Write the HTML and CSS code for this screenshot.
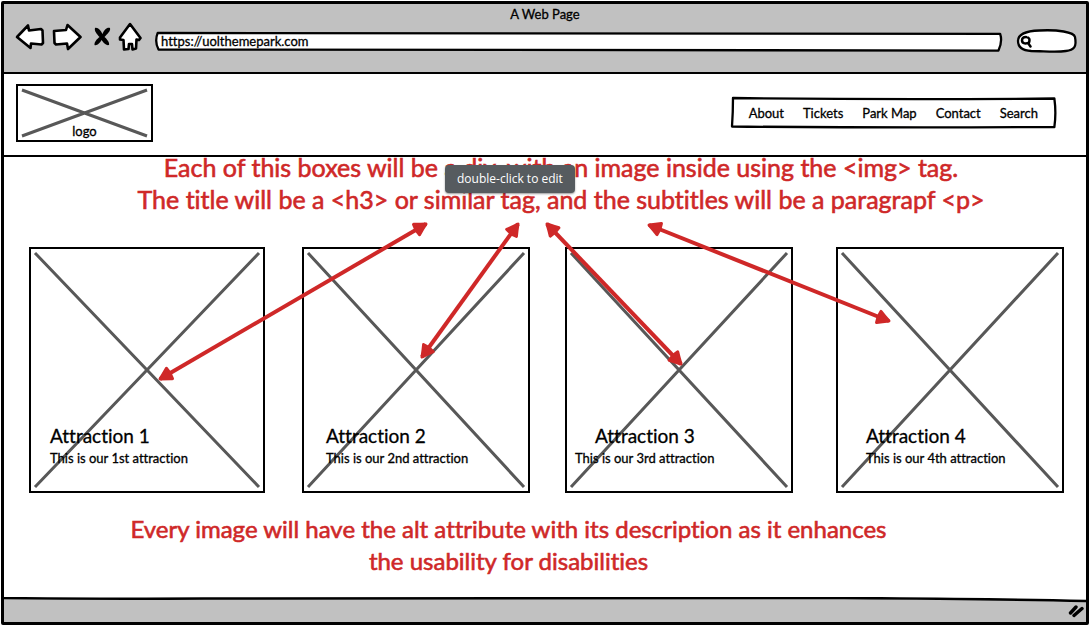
FILE: index.html
```html
<!DOCTYPE html>
<html lang="en">
<head>
<meta charset="utf-8">
<title>A Web Page</title>
<link rel="stylesheet" href="styles.css">
</head>
<body>
<div class="window">
  <header class="chrome">
    <div class="window-title">A Web Page</div>
    <div class="toolbar">
      <div class="tools">
        <button class="tool" type="button" aria-label="Back"><svg width="30" height="28" viewBox="0 0 30 28"><path d="M2 14 13 2.500 14 7.500 26 6 27.500 7.500 28 20 26.500 21.500 16 20.500 15.500 25Z"/></svg></button>
        <button class="tool" type="button" aria-label="Forward"><svg width="30" height="28" viewBox="0 0 30 28"><path d="M2 8 14 7 15.500 2 28.500 14 16 26 15 20.500 4 21.500 2.500 20Z"/></svg></button>
        <button class="tool tool-stop" type="button" aria-label="Stop"><svg width="18" height="22" viewBox="0 0 18 22"><path class="solid" d="M2 2C5 1 8 5 9.500 8 11 4 14 1 17 2 18 5 14 8 11.500 11 14 13 17 17 16 19 13 20 10 16 8.500 14 7 17 4 20 1.500 19 1 16 4 13 6.500 11 4 8 1 5 2 2Z"/></svg></button>
        <button class="tool" type="button" aria-label="Home"><svg width="24" height="30" viewBox="0 0 24 30"><path d="M12 2 22.500 16 21 18 18.500 17.500 18 26.500 14.500 27.500 14 22 11 22 10.500 27 6 27.500 5.500 18 2 17.500 2 15.500Z"/></svg></button>
      </div>
      <div class="field field-url">
        <svg class="sketch" viewBox="0 0 100 20" preserveAspectRatio="none" aria-hidden="true"><path d="M.2 1 99.900 2Q100.200 10 99.700 19.500L.3 18.500Q-.2 10 .2 1Z"/></svg>
        <input class="url" type="text" aria-label="Address" value="https://uolthemepark.com">
      </div>
      <div class="field field-search">
        <svg class="sketch" viewBox="0 0 58 22" preserveAspectRatio="none" aria-hidden="true"><path d="M1 11C1 4 8 1 22 .5 40-.5 56 2 57 7 59 17 56 20 48 21 38 22.500 26 21 14 21 5 20.500 1 17 1 11Z"/></svg>
        <svg class="lens" width="12" height="14" viewBox="0 0 12 14" aria-hidden="true"><path d="M6 2C9.500 2 10 5 9 7.500 6.500 9 2 9 2 5.500 2 3 4 2 6 2M8 8 10.500 11.500"/></svg>
        <input class="search" type="text" aria-label="Search the web">
      </div>
    </div>
  </header>

  <main class="page">
    <div class="site-header">
      <a class="logo" href="#">
        <svg class="cross" viewBox="0 0 100 100" preserveAspectRatio="none" aria-hidden="true"><path d="M0 0 100 100M100 0 0 100"/></svg>
        <span class="logo-text">logo</span>
      </a>
      <nav class="nav">
        <svg class="sketch" viewBox="0 0 326 29" preserveAspectRatio="none" aria-hidden="true"><path d="M1 0Q160 2 325 .5 327 15 325 29 160 30 0 28.500 1 14 1 0Z"/></svg>
        <a href="#">About</a><a href="#">Tickets</a><a href="#">Park Map</a><a href="#">Contact</a><a href="#">Search</a>
      </nav>
    </div>

    <div class="board">
      <div class="note note-top">Each of this boxes will be a div, with an image inside using the &lt;img&gt; tag.<br>The title will be a &lt;h3&gt; or similar tag, and the subtitles will be a paragrapf &lt;p&gt;</div>
      <div class="tooltip" role="tooltip">double-click to edit</div>

      <section class="cards">
        <article class="card">
          <svg class="cross" viewBox="0 0 100 100" preserveAspectRatio="none" aria-hidden="true"><path d="M0 0 100 100M100 0 0 100"/></svg>
          <h3>Attraction 1</h3><p>This is our 1st attraction</p>
        </article>
        <article class="card card-2">
          <svg class="cross" viewBox="0 0 100 100" preserveAspectRatio="none" aria-hidden="true"><path d="M0 0 100 100M100 0 0 100"/></svg>
          <h3>Attraction 2</h3><p>This is our 2nd attraction</p>
        </article>
        <article class="card card-3">
          <svg class="cross" viewBox="0 0 100 100" preserveAspectRatio="none" aria-hidden="true"><path d="M0 0 100 100M100 0 0 100"/></svg>
          <h3>Attraction 3</h3><p>This is our 3rd attraction</p>
        </article>
        <article class="card card-4">
          <svg class="cross" viewBox="0 0 100 100" preserveAspectRatio="none" aria-hidden="true"><path d="M0 0 100 100M100 0 0 100"/></svg>
          <h3>Attraction 4</h3><p>This is our 4th attraction</p>
        </article>
      </section>

      <svg class="arrows" viewBox="4 157 1082 440" preserveAspectRatio="none" aria-hidden="true">
        <defs>
          <marker id="head" viewBox="0 0 16 16" refX="14" refY="8" markerWidth="16" markerHeight="16" markerUnits="userSpaceOnUse" orient="auto-start-reverse"><path class="head" d="M3 2Q8 5 14 8 8 11 3 14 1.500 8 3 2Z"/></marker>
        </defs>
        <path class="arrow" d="M160 379 426 224"/>
        <path class="arrow" d="M422 357 518 224"/>
        <path class="arrow" d="M547 224 681 364"/>
        <path class="arrow" d="M649 225 889 321"/>
      </svg>

      <div class="note note-bottom">Every image will have the alt attribute with its description as it enhances<br>the usability for disabilities</div>
    </div>
  </main>

  <footer class="status">
    <svg class="status-bg" viewBox="0 0 1082 25" preserveAspectRatio="none" aria-hidden="true"><path d="M-5 1Q80 2 200 1.500T840 1Q1000 2 1087 4V30H-5Z"/></svg>
    <svg class="grip" width="16" height="14" viewBox="0 0 16 14" aria-hidden="true"><path d="M2.500 9 8 3M6 11.500 14 4.500"/></svg>
  </footer>
</div>
</body>
</html>
```

FILE: styles.css
```css
* { box-sizing: border-box; }

body {
  margin: 0;
  background: #fff;
  color: #000;
  font-family: Lato, "Open Sans", sans-serif;
  font-size: 13px;
  font-variant-ligatures: none;
  line-height: 18px;
  -webkit-text-stroke: 0.3px currentColor;
}

.window {
  display: flex;
  flex-direction: column;
  min-height: calc(100vh - 3px);
  margin: 1px 1px 2px;
  border: 3px solid #000;
  border-radius: 2px;
}

.chrome {
  height: 70px;
  background: #c1c1c1;
  border-bottom: 2px solid #000;
}

.window-title { padding-top: 1px; text-align: center; }

.toolbar {
  display: flex;
  align-items: center;
  gap: 14px;
  height: 30px;
  margin-top: -1px;
  padding: 0 10px 0 11px;
}

.tools { display: flex; align-items: center; gap: 7px; }

.tool {
  display: flex;
  padding: 0;
  border: 0;
  background: none;
}

.tool-stop { margin-left: 4px; }

.tool path {
  fill: #fff;
  stroke: #000;
  stroke-width: 2.6;
  stroke-linejoin: round;
}

.tool .solid { fill: #000; stroke: none; }

.sketch {
  position: absolute;
  inset: 0;
  width: 100%;
  height: 100%;
  overflow: visible;
}

.sketch path {
  fill: #fff;
  stroke: #000;
  stroke-width: 2.3px;
  stroke-linejoin: round;
  vector-effect: non-scaling-stroke;
}

.field { position: relative; display: flex; align-items: center; margin-top: 8px; }
.field-url { flex: 1; height: 19px; }
.field-search { width: 59px; height: 22px; margin-left: 2px; }

.field input {
  position: relative;
  width: 100%;
  padding: 0 5px;
  border: 0;
  outline: 0;
  background: none;
  color: #000;
  font: inherit;
  font-variant-ligatures: none;
  -webkit-text-stroke: inherit;
}

.field .search { padding-left: 18px; }

.lens { position: absolute; left: 3px; top: 5px; }

.lens path {
  fill: none;
  stroke: #000;
  stroke-width: 2.5;
  stroke-linecap: round;
}

.page { display: flex; flex: 1; flex-direction: column; }

.site-header {
  display: flex;
  align-items: center;
  justify-content: space-between;
  height: 83px;
  padding: 0 31px 4px 12px;
  border-bottom: 2px solid #000;
}

.logo {
  position: relative;
  display: flex;
  align-items: flex-end;
  justify-content: center;
  width: 137px;
  height: 58px;
  border: 2px solid #000;
  color: inherit;
  text-decoration: none;
}

.logo-text { position: relative; }

.cross {
  position: absolute;
  top: 4px;
  left: 4px;
  width: calc(100% - 8px);
  height: calc(100% - 8px);
  overflow: visible;
}

.cross path {
  fill: none;
  stroke: #585858;
  stroke-width: 3px;
  vector-effect: non-scaling-stroke;
}

.nav {
  position: relative;
  display: flex;
  gap: 19px;
  padding: 6px 17px 5px;
}

.nav a { position: relative; color: inherit; text-decoration: none; }

.board { position: relative; flex: 1; }

.note {
  margin-left: 32px;
  color: #cf2828;
  font-size: 24px;
  line-height: 32px;
  text-align: center;
  -webkit-text-stroke: 0.6px currentColor;
}

.note-top { margin-top: -6px; font-size: 25px; }
.note-bottom { margin: 20px 73px 0 0; }

.tooltip {
  position: absolute;
  top: 8px;
  left: calc(50% - 100px);
  padding: 5px 12px;
  border-radius: 4px;
  background: #565b5f;
  box-shadow: 0 1px 2px rgba(0, 0, 0, 0.4);
  color: #fff;
  font-family: "Open Sans", sans-serif;
  font-size: 12px;
  -webkit-text-stroke: 0;
}

.cards {
  display: grid;
  grid-template-columns: 236fr 37fr 228fr 35fr 228fr 43fr 228fr;
  margin: 32px 22px 0 25px;
}

.card {
  position: relative;
  display: flex;
  flex-direction: column;
  justify-content: flex-end;
  height: 246px;
  padding: 0 0 24px 19px;
  border: 2px solid #000;
}

.card-2 { grid-column: 3; padding-left: 22px; }
.card-3 { grid-column: 5; padding-left: 8px; }
.card-3 h3 { padding-left: 20px; }
.card-4 { grid-column: 7; padding-left: 28px; }

.card h3,
.card p { position: relative; margin: 0; }

.card h3 {
  font-size: 19px;
  font-weight: 400;
  line-height: 26px;
}

.arrows {
  position: absolute;
  inset: 0;
  width: 100%;
  height: 100%;
  pointer-events: none;
}

.arrow {
  fill: none;
  stroke: #cf2828;
  stroke-width: 4;
  marker-start: url(#head);
  marker-end: url(#head);
}

.head {
  fill: #cf2828;
  stroke: #cf2828;
  stroke-width: 3;
  stroke-linejoin: round;
}

.status { position: relative; height: 25px; }

.status-bg {
  position: absolute;
  inset: 0;
  width: 100%;
  height: 100%;
}

.status-bg path {
  fill: #c1c1c1;
  stroke: #000;
  stroke-width: 2.5px;
  vector-effect: non-scaling-stroke;
}

.grip { position: absolute; right: 2px; bottom: 4px; }

.grip path {
  stroke: #000;
  stroke-width: 3.4;
  stroke-linecap: round;
}
```
